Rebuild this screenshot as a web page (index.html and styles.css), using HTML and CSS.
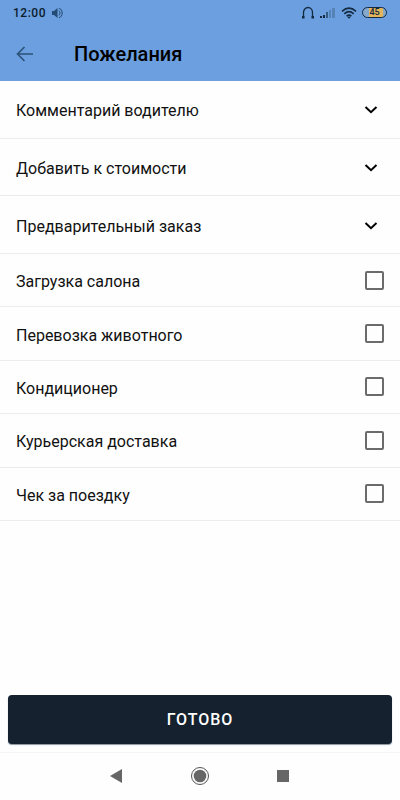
FILE: index.html
```html
<!DOCTYPE html>
<html lang="ru">
<head>
<meta charset="utf-8">
<meta name="viewport" content="width=device-width, initial-scale=1">
<title>Пожелания</title>
<link rel="stylesheet" href="styles.css">
</head>
<body>
<header class="header">
  <div class="status">
    <div class="status-group">
      <time class="clock">12:00</time>
      <svg class="icon-sound" width="12" height="12" viewBox="0 0 12 12" aria-hidden="true"><path d="M1 4h2l3.500-3v10L3 8H1z" fill="#234b73"/><path d="M8 3.500c1.300 1.200 1.300 3.800 0 5M8 1.200c4.200 1 4.200 8.600 0 9.600" fill="none" stroke="#234b73"/></svg>
    </div>
    <div class="status-group">
      <svg width="14" height="14" viewBox="0 0 14 14" aria-hidden="true"><path d="M2.500 11V6.500a4.500 5 0 0 1 9 0V11" fill="none" stroke="#142a40" stroke-width="1.300"/><path d="M1 10h2.500v2.500H1zM13 10h-2.500v2.500H13z" fill="#142a40"/></svg>
      <svg width="16" height="12" viewBox="0 0 16 12" aria-hidden="true"><path d="M0 9h2v2H0zM3 8h2v3H3z" fill="#142a40"/><path d="M6 5h2v6H6z" fill="#34597f"/><path d="M9 3h2v8H9zM12 1h3v10h-3z" fill="#5583b8"/></svg>
      <svg class="icon-wifi" width="16" height="12" viewBox="0 0 16 12" aria-hidden="true"><path d="M1 4.300q7-6.200 14 0M3.300 6.800q4.700-4.200 9.400 0M5.600 9.100q2.400-2 4.800 0" fill="none" stroke="#142a40" stroke-width="1.600"/><path d="M6.300 10q1.700-1.200 3.400 0L8 11.800z" fill="#142a40"/></svg>
      <span class="battery">45</span>
    </div>
  </div>
  <div class="toolbar">
    <button class="back" type="button" aria-label="Назад"><svg width="18" height="16" viewBox="0 0 18 16" aria-hidden="true"><path d="M17 8H2M8.500 1L1.500 8l7 7" fill="none" stroke="#2d5277" stroke-width="1.600"/></svg></button>
    <h1 class="title">Пожелания</h1>
  </div>
</header>
<main class="content">
  <div class="group group-expand">
    <button class="row" type="button" aria-expanded="false">Комментарий водителю <svg class="chevron" width="14" height="8" viewBox="0 0 14 8" aria-hidden="true"><path d="M1.500 1L7 6.200 12.500 1"/></svg></button>
    <button class="row" type="button" aria-expanded="false">Добавить к стоимости <svg class="chevron" width="14" height="8" viewBox="0 0 14 8" aria-hidden="true"><path d="M1.500 1L7 6.200 12.500 1"/></svg></button>
    <button class="row" type="button" aria-expanded="false">Предварительный заказ <svg class="chevron" width="14" height="8" viewBox="0 0 14 8" aria-hidden="true"><path d="M1.500 1L7 6.200 12.500 1"/></svg></button>
  </div>
  <div class="group group-check">
    <label class="row">Загрузка салона <input class="check" type="checkbox"></label>
    <label class="row">Перевозка животного <input class="check" type="checkbox"></label>
    <label class="row">Кондиционер <input class="check" type="checkbox"></label>
    <label class="row">Курьерская доставка <input class="check" type="checkbox"></label>
    <label class="row">Чек за поездку <input class="check" type="checkbox"></label>
  </div>
</main>
<div class="actions"><button class="done" type="button">ГОТОВО</button></div>
<nav class="system-nav">
  <button class="nav-button" type="button" aria-label="Назад"><svg width="20" height="20" viewBox="0 0 20 20" aria-hidden="true"><path d="M3 10l12-7v14z" fill="#666"/></svg></button>
  <button class="nav-button" type="button" aria-label="Домой"><svg width="20" height="20" viewBox="0 0 20 20" aria-hidden="true"><circle cx="10" cy="10" r="8.500" fill="none" stroke="#555"/><circle cx="10" cy="10" r="6.300" fill="#666"/></svg></button>
  <button class="nav-button" type="button" aria-label="Недавние"><svg width="20" height="20" viewBox="0 0 20 20" aria-hidden="true"><path d="M4 4h12v12H4z" fill="#666"/></svg></button>
</nav>
</body>
</html>
```
FILE: styles.css
```css
* {
  box-sizing: border-box;
}

body {
  display: flex;
  flex-direction: column;
  min-height: 100vh;
  margin: 0;
  background: #fefefe;
  color: #111;
  font-family: Roboto, "Noto Sans", sans-serif;
}

button {
  padding: 0;
  border: 0;
  background: none;
  color: inherit;
  font: inherit;
}

svg {
  display: block;
}

.header {
  padding-bottom: 2px;
  background: #6b9fdf;
}

.status {
  display: flex;
  align-items: center;
  justify-content: space-between;
  height: 25px;
  padding: 0 13px;
}

.status-group {
  display: flex;
  align-items: center;
  gap: 5px;
}

.clock {
  color: #0c1c2c;
  font-size: 12px;
  font-weight: 500;
  letter-spacing: 0.5px;
}

.battery {
  width: 25px;
  height: 11px;
  border: 1px solid #142a40;
  border-radius: 6px;
  background: linear-gradient(90deg, #85a9cc 0 25%, #e2b45c 25% 85%, #85a9cc 85%);
  color: #142a40;
  font-size: 9px;
  font-weight: 500;
  line-height: 9px;
  text-align: center;
}

.toolbar {
  display: flex;
  align-items: center;
  gap: 40px;
  height: 54px;
  padding: 4px 16px 0;
}

.title {
  margin: 0;
  color: #000;
  font-size: 20px;
  font-weight: 500;
  line-height: 24px;
}

.content {
  flex: 1;
}

.group {
  display: grid;
  grid-auto-rows: 1fr;
}

.group-expand {
  min-height: 173px;
}

.group-check {
  min-height: 267px;
}

.row {
  display: flex;
  align-items: center;
  justify-content: space-between;
  padding: 4px 16px 0;
  border-bottom: 1px solid #ececec;
  font-size: 16px;
  line-height: 20px;
  text-align: left;
}

.chevron {
  margin: 0 6px 2px 0;
  fill: none;
  stroke: #000;
  stroke-width: 2;
}

.check {
  appearance: none;
  width: 19px;
  height: 19px;
  margin: 0 0 4px;
  border: 2px solid #6b6b6b;
  border-radius: 2px;
}

.check:checked {
  background: #6b6b6b;
}

.actions {
  padding: 8px;
}

.done {
  display: block;
  width: 100%;
  height: 49px;
  border-radius: 4px;
  background: #15212e;
  box-shadow: 0 1px 1px #8a949e;
  color: #fff;
  font-size: 16px;
  font-weight: 500;
  letter-spacing: 1px;
}

.system-nav {
  display: flex;
  align-items: center;
  justify-content: center;
  gap: 63px;
  height: 48px;
  padding-bottom: 2px;
  border-top: 1px solid #f5f5f5;
}
```
